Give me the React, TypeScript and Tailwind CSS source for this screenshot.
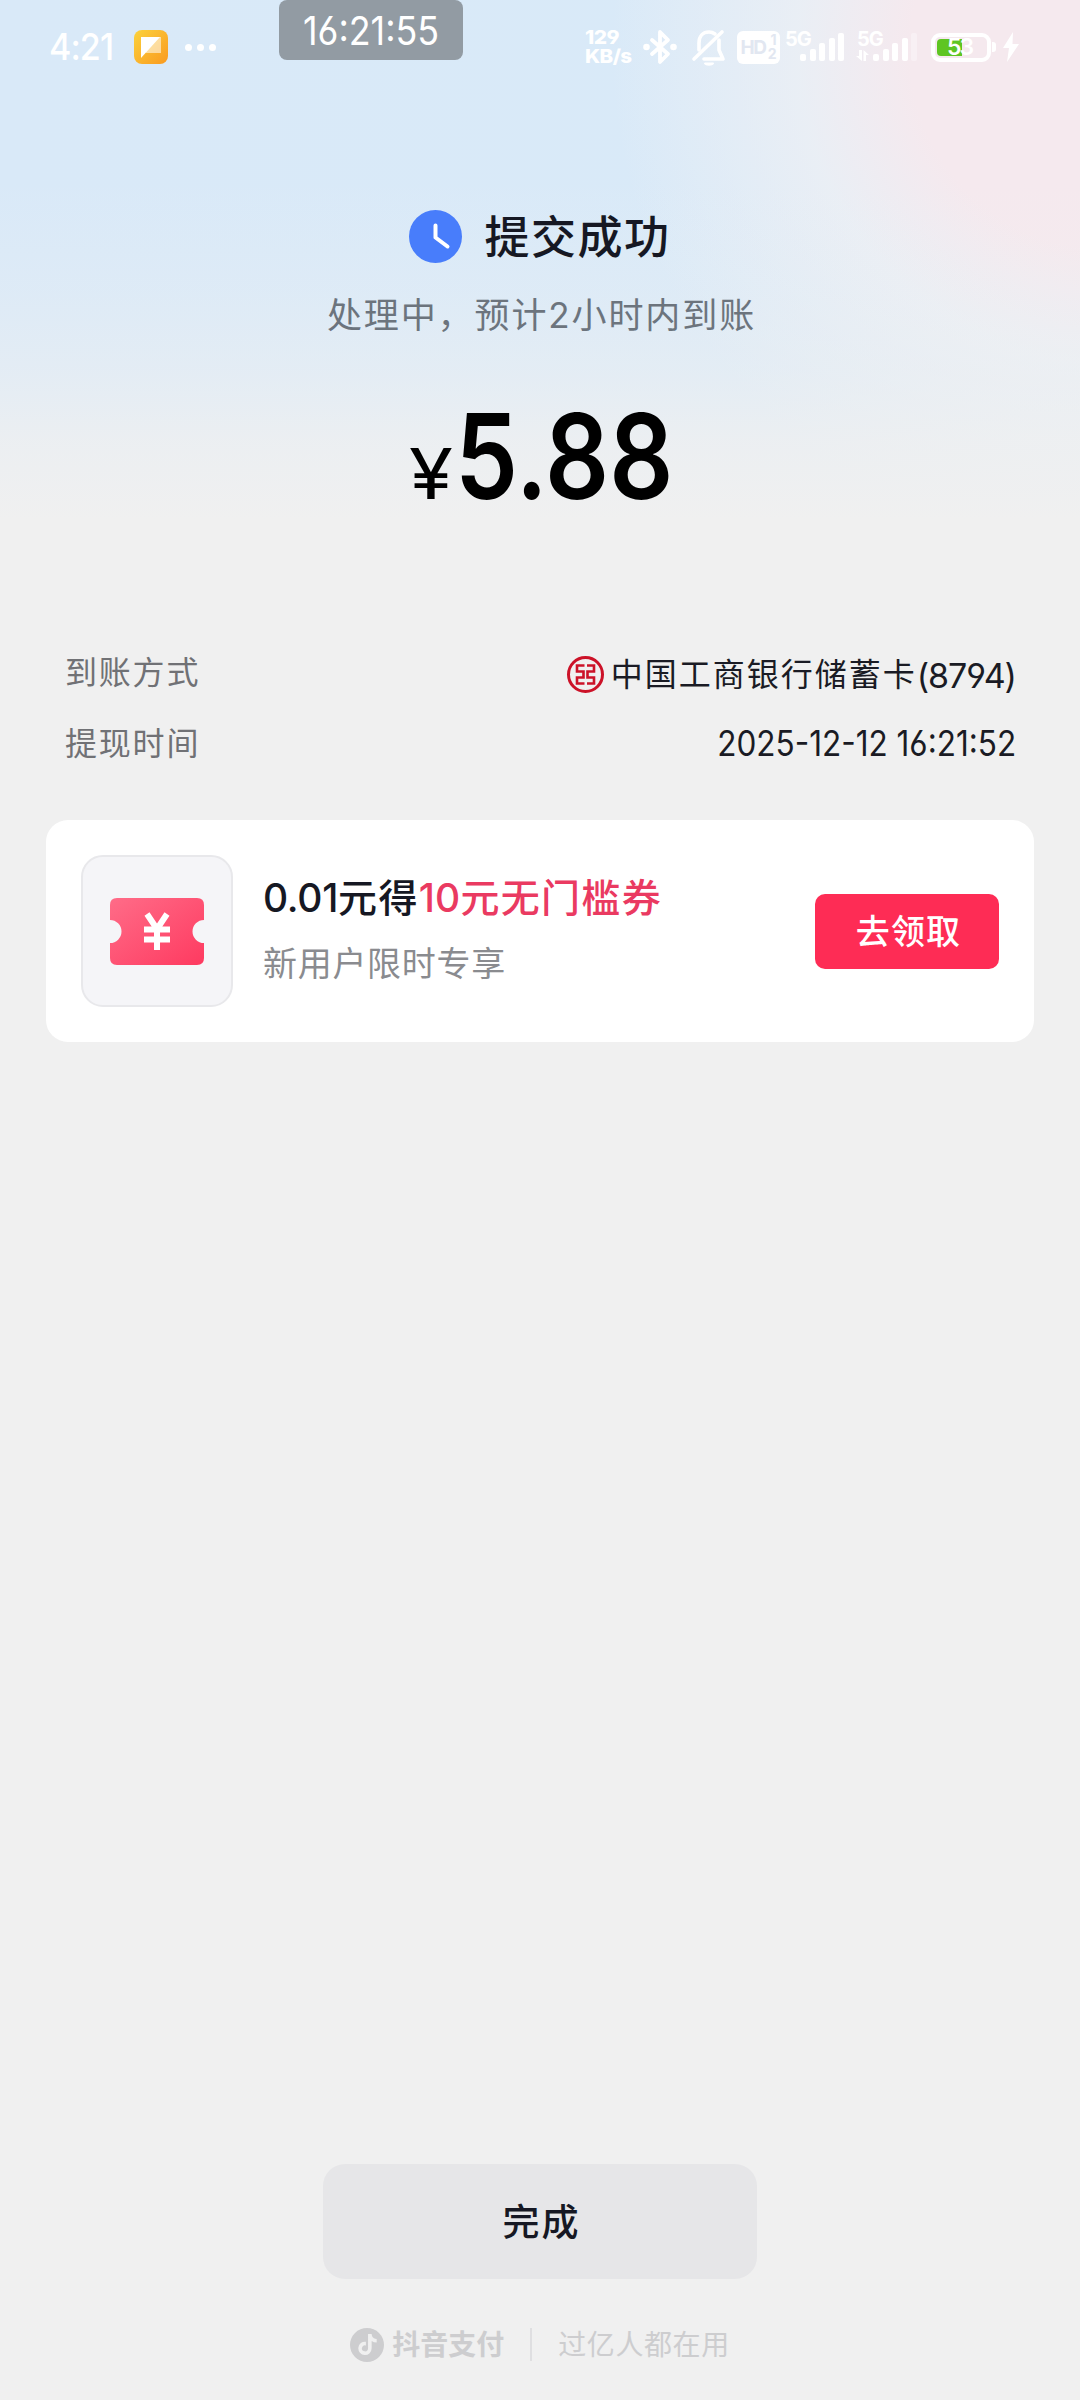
import type { ReactNode } from "react";
import { FaTiktok } from "react-icons/fa6";

const SIGNAL_HEIGHTS = [7, 12, 18, 23, 28];

function NoteIcon() {
  return (
    <svg className="w-[34px] h-[34px]" viewBox="0 0 34 34">
      <defs>
        <linearGradient id="note" x1="0" y1="0" x2="1" y2="1">
          <stop offset="0" stopColor="#fbd23c" />
          <stop offset="1" stopColor="#fa9a20" />
        </linearGradient>
      </defs>
      <rect width="34" height="34" rx="8" fill="url(#note)" />
      <path d="M7 7H27V23H12Z" fill="#fff" opacity="0.55" />
      <path d="M7 7H26L7 28Z" fill="#fff" />
    </svg>
  );
}

function BluetoothIcon() {
  return (
    <svg className="w-[34px] h-[38px]" viewBox="0 0 34 38" fill="none" stroke="#fff" strokeWidth="3.8" strokeLinejoin="round" strokeLinecap="round">
      <path d="M9 12L25 26L17 34V4L25 12L9 26" />
      <circle cx="3.5" cy="19" r="1.5" strokeWidth="3.6" />
      <circle cx="30.5" cy="19" r="1.5" strokeWidth="3.6" />
    </svg>
  );
}

function BellOffIcon() {
  return (
    <svg className="w-[36px] h-[38px]" viewBox="0 0 36 38" fill="none" stroke="#fff" strokeWidth="3.6" strokeLinecap="round" strokeLinejoin="round">
      <path d="M8 22V15C8 8 12 4 18 4C20.500 4 22 4.500 24 6" />
      <path d="M28 12V22L32 31H13" />
      <path d="M3 31L31 4" />
      <path d="M14 35.500H22C21 37 15 37 14 35.500Z" strokeWidth="2" fill="#fff" />
    </svg>
  );
}

function SignalBars({ weak = false }: { weak?: boolean }) {
  return (
    <div className="flex items-end gap-[3.500px]">
      {SIGNAL_HEIGHTS.map((h, i) => (
        <span
          key={h}
          className={`w-[6px] rounded-[2px] bg-white ${weak && i === 4 ? "opacity-35" : ""}`}
          style={{ height: h }}
        />
      ))}
    </div>
  );
}

function Battery() {
  return (
    <div className="flex items-center ml-[14px]">
      <div className="relative w-[60px] h-[29px] rounded-[9px] border-4 border-white">
        <div className="absolute left-[2px] top-[2px] w-[25px] h-[17px] rounded-l-[4px] bg-[#5ec522]" />
        <span className="absolute left-[12px] top-0 text-[23px] leading-[21px] font-semibold text-white tracking-[-2px]">
          53
        </span>
      </div>
      <span className="w-[4px] h-[10px] ml-[1px] rounded-r-[3px] bg-white" />
      <svg className="w-[18px] h-[30px] ml-[6px]" viewBox="0 0 18 30" fill="#fff">
        <path d="M11 0L1 16H7L5 30L17 12H10.500Z" />
      </svg>
    </div>
  );
}

function StatusBar() {
  return (
    <div className="relative flex h-[94px] items-center pl-[49px] pr-[60px] text-white">
      <span className="w-[85px]">
        <span className="inline-block origin-left scale-x-[0.92] text-[37px] leading-[38px] font-medium tracking-[-1px]">4:21</span>
      </span>
      <NoteIcon />
      <div className="flex gap-[5px] ml-[17px]">
        <span className="size-[7px] rounded-full bg-white" />
        <span className="size-[7px] rounded-full bg-white" />
        <span className="size-[7px] rounded-full bg-white" />
      </div>

      {/* floating clock */}
      <div className="absolute left-[279px] top-0 flex h-[60px] w-[184px] items-center justify-center rounded-[8px] bg-[#929ba3] pt-[2px] text-[39px]">
        <span className="scale-x-[0.92] whitespace-nowrap">16:21:55</span>
      </div>

      <div className="ml-auto flex items-center">
        <div className="flex w-[58px] flex-col items-start text-[19px] leading-[19px] font-extrabold tracking-[-0.500px]">
          <span className="origin-left scale-x-[1.1]">129</span>
          <span className="origin-left scale-x-[1.08]">KB/s</span>
        </div>
        <BluetoothIcon />
        <div className="ml-[14px]">
          <BellOffIcon />
        </div>
        <div className="ml-[10px] flex h-[33px] w-[43px] items-center justify-center rounded-[6px] bg-white text-[#e2e7f1]">
          <span className="w-[26px] text-[19px] leading-none font-bold tracking-[-1.500px]">HD</span>
          <span className="flex w-[10px] flex-col items-end text-[14px] leading-[14px] font-bold">
            <span>1</span>
            <span>2</span>
          </span>
        </div>
        <div className="relative ml-[20px] flex h-[28px] items-end">
          <span className="absolute -left-[15px] -top-[4px] text-[20px] leading-[20px] font-bold tracking-[-1px]">5G</span>
          <SignalBars />
        </div>
        <div className="relative ml-[29px] flex h-[28px] items-end">
          <span className="absolute -left-[16px] -top-[4px] text-[20px] leading-[20px] font-bold tracking-[-1px]">5G</span>
          <svg className="absolute -left-[17px] bottom-0 w-[13px] h-[11px]" viewBox="0 0 13 11" fill="#fff">
            <path d="M3 0H6V11L0 6H3Z" />
            <path d="M7.500 11V0L13 5H10V11Z" />
          </svg>
          <SignalBars weak />
        </div>
        <Battery />
      </div>
    </div>
  );
}

function ClockIcon() {
  return (
    <svg className="w-[53px] h-[53px]" viewBox="0 0 53 53">
      <circle cx="26.500" cy="26.500" r="26.500" fill="#487dfb" />
      <path d="M26.500 15.500V27.500L38.500 36.500" fill="none" stroke="#fff" strokeWidth="4" strokeLinecap="round" strokeLinejoin="round" />
    </svg>
  );
}

function BankLogo() {
  return (
    <svg className="mt-[3px] w-[37px] h-[37px]" viewBox="0 0 37 37" fill="none" stroke="#cc1228">
      <circle cx="18.500" cy="18.500" r="17" strokeWidth="3" />
      <path d="M17.500 9.500H10V15.500H16.500V21.500H10V27.500H17.500" strokeWidth="2.600" />
      <path d="M20 9.500H27V15.500H20.500V21.500H27V27.500H20" strokeWidth="2.600" />
    </svg>
  );
}

function TicketIcon() {
  return (
    <svg className="w-[94px] h-[67px]" viewBox="0 0 94 67">
      <defs>
        <linearGradient id="ticket" x1="0" y1="0" x2="1" y2="1">
          <stop offset="0" stopColor="#ff6c88" />
          <stop offset="1" stopColor="#fe3a60" />
        </linearGradient>
      </defs>
      <path
        d="M7 0H87Q94 0 94 7V22A11.500 11.500 0 0 0 94 45V60Q94 67 87 67H7Q0 67 0 60V45A11.500 11.500 0 0 0 0 22V7Q0 0 7 0Z"
        fill="url(#ticket)"
      />
      <path d="M37 16L47 31L57 16M34 31.500H60M34 41.500H60M47 30V52" fill="none" stroke="#fff" strokeWidth="6" />
    </svg>
  );
}

function InfoRow({ label, children }: { label: string; children: ReactNode }) {
  return (
    <div className="flex h-[71px] items-center justify-between">
      <span className="text-[32px] tracking-[1.800px] text-[#707175]">{label}</span>
      <div className="flex items-center text-[#1a1b24]">{children}</div>
    </div>
  );
}

function CouponCard() {
  return (
    <div className="mx-[46px] mt-[41px] flex h-[222px] items-center rounded-[22px] bg-white pl-[35px] pr-[35px]">
      <div className="flex size-[152px] items-center justify-center rounded-[22px] border-2 border-[#e8e8eb] bg-[#f5f5f8]">
        <TicketIcon />
      </div>
      <div className="ml-[30px] flex-1 pb-[3px]">
        <div className="text-[39px] leading-[50px] font-medium whitespace-nowrap tracking-[1.300px] text-[#161823]">
          <span className="tracking-[-0.300px]">0.01</span>元得
          <span className="text-[#ea3a61]">
            <span className="tracking-[0.200px]">10</span>元无门槛券
          </span>
        </div>
        <div className="mt-[19px] text-[34px] leading-[44px] tracking-[0.700px] text-[#8a8b8f]">新用户限时专享</div>
      </div>
      <button className="h-[75px] w-[184px] rounded-[10px] bg-[#fe2c55] pl-[3px] text-[34px] font-medium tracking-[1.200px] text-white">
        去领取
      </button>
    </div>
  );
}

export default function App() {
  return (
    <div className="flex h-[2400px] w-[1080px] flex-col overflow-hidden bg-[#f0f0f0] bg-[linear-gradient(180deg,rgba(240,240,240,0)_180px,rgba(240,240,240,0.2)_290px,rgba(240,240,240,0.45)_370px,rgba(240,240,240,0.8)_440px,#f0f0f0_520px),radial-gradient(ellipse_400px_400px_at_1110px_50px,#f5e9ee_50%,rgba(239,240,244,0.75)_78%,rgba(218,234,248,0)_125%),linear-gradient(90deg,#d9e9f8,#d9eaf8)] font-['Inter','Noto_Sans_CJK_SC',sans-serif] [font-feature-settings:'cv03','cv04']">
      <StatusBar />

      <div className="mt-[107px] flex flex-col items-center">
        <div className="flex h-[70px] items-center gap-[22px]">
          <ClockIcon />
          <h1 className="pt-[3px] text-[45px] leading-[70px] font-medium tracking-[1.500px] text-[#161823]">提交成功</h1>
        </div>
        <p className="mt-[19px] pl-[3px] text-[35px] leading-[50px] tracking-[1.900px] text-[#6c747d]">处理中，预计2小时内到账</p>
        <div className="mt-[56px] flex w-[262px] items-baseline text-black">
          <span className="w-[46px] shrink-0">
            <span className="inline-block origin-left scale-x-[1.14] text-[70px] leading-[120px]">¥</span>
          </span>
          <span className="inline-block origin-left scale-x-[0.85] text-[118px] leading-[120px] font-semibold">5.88</span>
        </div>
      </div>

      <div className="mt-[103px] flex flex-col pl-[65px] pr-[64px]">
        <InfoRow label="到账方式">
          <BankLogo />
          <span className="ml-[7px] pt-[5px] text-[32px] tracking-[2px]">中国工商银行储蓄卡</span>
          <span className="pt-[5px] text-[34px] tracking-[-1px]">(8794)</span>
        </InfoRow>
        <InfoRow label="提现时间">
          <span className="origin-right scale-x-[0.9] text-[35px]">2025-12-12 16:21:52</span>
        </InfoRow>
      </div>

      <CouponCard />

      <div className="mt-auto flex flex-col items-center">
        <button className="h-[115px] w-[434px] rounded-[22px] bg-[#e6e6e8] pt-[2px] pl-[3px] text-[37px] font-medium tracking-[2px] text-[#161823]">
          完成
        </button>
        <div className="mt-[40px] mb-[30px] flex h-[51px] items-center text-[28px] text-[#cdcdcf]">
          <span className="flex size-[34px] items-center justify-center rounded-full bg-[#cdcdcf] text-[#f0f0f0]">
            <FaTiktok className="size-[21px]" />
          </span>
          <span className="ml-[8px] font-bold">抖音支付</span>
          <span className="mx-[26px] h-[33px] w-[2px] bg-[#dfdfe1]" />
          <span className="tracking-[0.600px]">过亿人都在用</span>
        </div>
      </div>
    </div>
  );
}
